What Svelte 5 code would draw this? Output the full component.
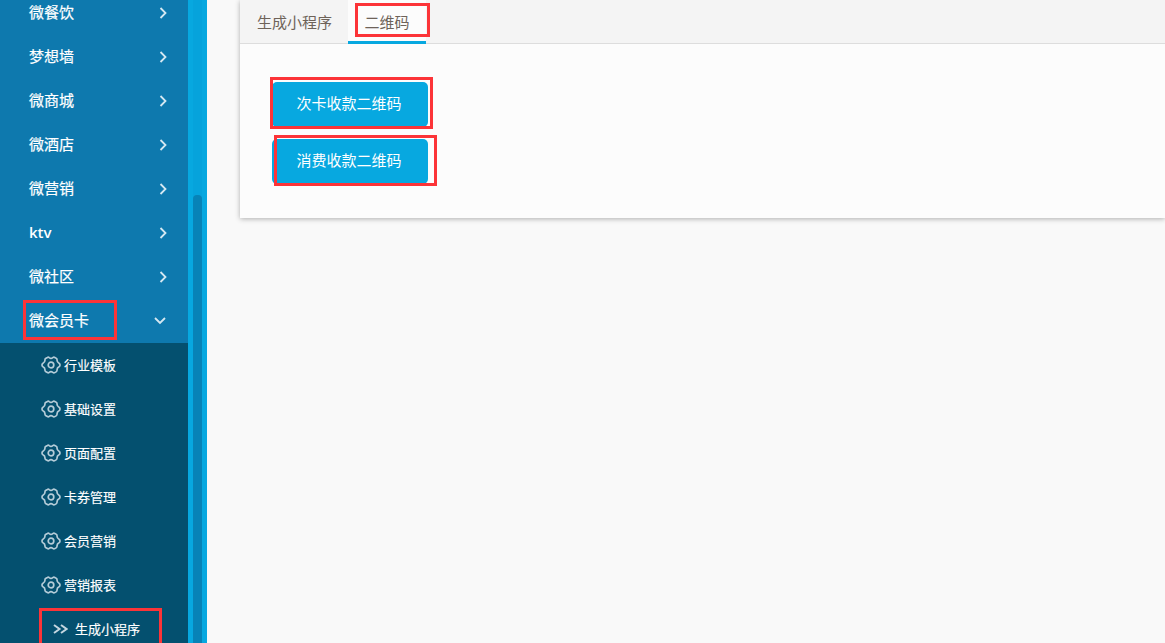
<script>
  const menus = ['微餐饮', '梦想墙', '微商城', '微酒店', '微营销', 'ktv', '微社区'];
  const subs = ['行业模板', '基础设置', '页面配置', '卡券管理', '会员营销', '营销报表'];
</script>

<div class="page">
  <aside class="sidebar">
    <nav class="nav">
      {#each menus as name}
        <div class="item">
          <span class:latin={name === 'ktv'}>{name}</span>
          <svg class="arrow" width="8" height="12" viewBox="0 0 8 12"><path d="M1.5 1 L6.5 6 L1.5 11" /></svg>
        </div>
      {/each}
      <div class="item">
        <span class="mark active-title">微会员卡</span>
        <svg class="arrow down" width="12" height="8" viewBox="0 0 12 8"><path d="M1 1 L6 6 L11 1" /></svg>
      </div>
      <div class="sub">
        {#each subs as name}
          <div class="sub-item">
            <svg class="gear" width="20" height="20" viewBox="0 0 20 20">
              <path d="M6.4 2.4 Q7.4 1.8 8.2 2.6 Q10 4 11.8 2.6 Q12.8 1.8 13.8 2.4 L15.4 3.4 Q16.2 4 16 5 Q16 7.2 18 8.2 Q19 8.8 19 10 Q19 11.2 18 11.8 Q16 12.8 16 15 Q16.2 16 15.4 16.6 L13.8 17.6 Q12.8 18.2 11.8 17.4 Q10 16 8.2 17.4 Q7.4 18.2 6.4 17.6 L4.6 16.6 Q3.8 16 4 15 Q4 12.8 2 11.8 Q1 11.2 1 10 Q1 8.8 2 8.2 Q4 7.2 4 5 Q3.8 4 4.6 3.4 Z" />
              <circle cx="10" cy="10" r="2.8" />
            </svg>
            <span>{name}</span>
          </div>
        {/each}
        <div class="sub-item current">
          <svg class="chevrons" width="15" height="10" viewBox="0 0 15 10"><path d="M1 1 L6.5 5 L1 9 M8 1 L13.5 5 L8 9" /></svg>
          <span class="mark">生成小程序</span>
        </div>
      </div>
    </nav>
    <div class="scrollbar"><div class="thumb"></div></div>
  </aside>

  <main class="main">
    <section class="card">
      <div class="tabs">
        <div class="tab">生成小程序</div>
        <div class="tab selected"><span class="mark">二维码</span></div>
      </div>
      <div class="body">
        <div class="btn-wrap first"><button>次卡收款二维码</button></div>
        <div class="btn-wrap second"><button>消费收款二维码</button></div>
      </div>
    </section>
  </main>
</div>

<style>
  :global(body) {
    margin: 0;
    overflow: hidden;
  }

  .page {
    display: flex;
    width: 1165px;
    height: 643px;
    overflow: hidden;
    background: #f9f9f9;
    font-family: "Open Sans", "Noto Sans CJK SC", sans-serif;
  }

  .sidebar {
    display: flex;
    flex: none;
    width: 207px;
    height: 643px;
    background: #07a8e0;
  }

  .nav {
    width: 188px;
    height: 643px;
    overflow: hidden;
    background: #0e79ae;
  }

  .item {
    display: flex;
    align-items: center;
    justify-content: space-between;
    height: 44px;
    padding: 0 21px 0 29px;
    box-sizing: border-box;
    color: #fff;
    font-size: 15px;
    -webkit-text-stroke: 0.2px #fff;
    position: relative;
  }

  .item span {
    margin-bottom: 2px;
  }

  .item .latin {
    margin-bottom: 0;
    font-weight: 600;
    -webkit-text-stroke: 0;
  }

  .item:first-child {
    margin-top: -10px;
  }

  .arrow {
    margin-top: 1px;
  }

  .arrow.down {
    margin-right: 1px;
  }

  .arrow path {
    fill: none;
    stroke: #d5e8f2;
    stroke-width: 1.8;
  }

  .sub {
    background: #04506f;
    height: 320px;
    margin-top: 1px;
  }

  .sub-item {
    display: flex;
    align-items: center;
    gap: 3px;
    height: 44px;
    padding-left: 41px;
    color: #fff;
    font-size: 13px;
    -webkit-text-stroke: 0.15px #fff;
  }

  .sub-item:first-child {
    height: 43px;
  }

  .gear {
    margin-top: 1px;
  }

  .gear path,
  .gear circle {
    fill: none;
    stroke: #b5ccd8;
    stroke-width: 1.7;
    stroke-linejoin: round;
  }

  .current {
    gap: 7px;
    padding-left: 53px;
  }

  .chevrons {
    margin-top: 1px;
  }

  .chevrons path {
    fill: none;
    stroke: #c4d6e0;
    stroke-width: 2;
  }

  .mark {
    position: relative;
  }

  .mark::after {
    content: "";
    position: absolute;
    border: 3px solid #fc3438;
    pointer-events: none;
  }

  .active-title::after {
    left: -6px;
    right: -28px;
    top: -9px;
    bottom: -10px;
  }

  .current .mark::after {
    left: -36px;
    right: -22px;
    top: -11px;
    bottom: -11px;
  }

  .scrollbar {
    width: 9px;
    margin-left: 5px;
    background: #06a3dc;
    padding-top: 195px;
    box-sizing: border-box;
  }

  .thumb {
    height: 448px;
    background: #0783b7;
    border-radius: 4px 4px 0 0;
  }

  .main {
    flex: 1;
    padding-left: 33px;
  }

  .card {
    height: 218px;
    background: #fcfcfc;
    box-shadow: 0 1px 5px rgba(0, 0, 0, 0.3);
  }

  .tabs {
    display: flex;
    height: 44px;
    box-sizing: border-box;
    padding-left: 6px;
    background: #f4f4f4;
    border-bottom: 1px solid #ddd;
  }

  .tab {
    height: 43px;
    padding: 0 11px;
    margin-right: 5px;
    line-height: 44px;
    color: #6e6359;
    font-size: 15px;
  }

  .tab.selected {
    width: 78px;
    height: 44px;
    margin: 0;
    padding: 0;
    box-sizing: border-box;
    text-align: center;
    background: #fcfcfc;
    border-bottom: 3px solid #07a8e0;
  }

  .tab.selected .mark::after {
    left: -10px;
    right: -20px;
    top: -9px;
    bottom: -5px;
  }

  .body {
    padding: 38px 0 0 32px;
  }

  .btn-wrap {
    position: relative;
    width: 156px;
    height: 45px;
    margin-bottom: 12px;
  }

  .btn-wrap::after {
    content: "";
    position: absolute;
    box-sizing: border-box;
    border: 3px solid #fc3438;
    pointer-events: none;
  }

  .btn-wrap.first::after {
    left: -2px;
    top: -5px;
    width: 163px;
    height: 52px;
  }

  .btn-wrap.second::after {
    left: 2px;
    top: -4px;
    width: 163px;
    height: 51px;
  }

  button {
    display: block;
    width: 100%;
    height: 100%;
    padding: 0 2px 5px 0;
    border: none;
    border-radius: 5px;
    background: #07a8e0;
    color: #fff;
    font-family: inherit;
    font-size: 15px;
  }
</style>
